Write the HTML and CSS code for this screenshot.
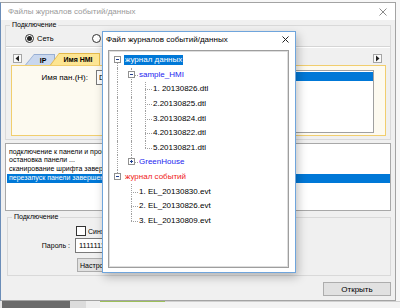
FILE: index.html
```html
<!DOCTYPE html>
<html lang="ru">
<head>
    <meta charset="UTF-8">
    <meta name="viewport" content="width=device-width, initial-scale=1.0">
    <title>Файлы журналов событий/данных</title>
    <link rel="stylesheet" href="styles.css">
</head>
<body>

    <div class="win">
        <div class="titlebar">
            <span class="title">Файлы журналов событий/данных</span>
            <svg class="close" width="8" height="8" viewBox="0 0 8 8"><path d="M0.5 0.5L7.5 7.5M7.5 0.5L0.5 7.5" stroke="#8a8a8a" stroke-width="1"/></svg>
        </div>

        <div class="content">
            <fieldset class="grp grp-top">
                <legend>Подключение</legend>
                <div class="radios">
                    <label class="opt"><span class="radio on"></span>Сеть</label>
                    <label class="opt" aria-label="Последовательный порт"><span class="radio"></span></label>
                </div>
                <div class="tabarea">
                    <div class="tabstrip">
                        <span class="scroll">
                            <svg width="7" height="7" viewBox="0 0 7 7"><path d="M5 0.5L1.5 3.5L5 6.5Z" fill="#222"/></svg>
                        </span>
                        <div class="tab tab-ip"><span class="tab-in">IP</span></div>
                        <div class="tab tab-hmi"><span class="tab-in">Имя HMI</span></div>
                        <span class="scroll scroll-right">
                            <svg width="7" height="7" viewBox="0 0 7 7"><path d="M2 0.5L5.5 3.5L2 6.5Z" fill="#222"/></svg>
                        </span>
                    </div>
                    <div class="tabpage">
                        <label class="lbl">Имя пан.(H):</label>
                        <div class="field">D</div>
                        <ul class="listbox">
                            <li class="sel"></li>
                        </ul>
                    </div>
                </div>
            </fieldset>

            <ul class="log">
                <li>подключение к панели и проверка связи ...</li>
                <li>остановка панели ...</li>
                <li>сканирование шрифта завершено ...</li>
                <li class="sel">перезапуск панели завершен ...</li>
            </ul>

            <fieldset class="grp grp-bottom">
                <legend>Подключение</legend>
                <div class="conn">
                    <span></span>
                    <label class="chk"><span class="box"></span>Синхронизировать время</label>
                    <label class="lbl-pass">Пароль :</label>
                    <div class="field field-pass">11111111</div>
                    <span></span>
                    <button class="btn btn-setup" type="button">Настройки связи...</button>
                </div>
            </fieldset>

            <div class="actions">
                <button class="btn btn-open" type="button">Открыть</button>
            </div>
        </div>
    </div>

    <!-- окно выбора файла журнала -->
    <div class="dlg">
        <div class="dlg-title">
            <span>Файл журналов событий/данных</span>
            <svg class="close" width="7" height="7" viewBox="0 0 7 7"><path d="M0.5 0.5L6.5 6.5M6.5 0.5L0.5 6.5" stroke="#222" stroke-width="1"/></svg>
        </div>
        <div class="tree">
            <div class="row">
                <span class="c down"><span class="exp"></span></span>
                <span class="tx sel">журнал данных</span>
            </div>
            <div class="row">
                <span class="c v"></span>
                <span class="c t"><span class="exp"></span></span>
                <span class="tx node">sample_HMI</span>
            </div>
            <div class="row">
                <span class="c v"></span><span class="c v"></span><span class="c t"></span>
                <span class="tx">1. 20130826.dtl</span>
            </div>
            <div class="row">
                <span class="c v"></span><span class="c v"></span><span class="c t"></span>
                <span class="tx">2.20130825.dtl</span>
            </div>
            <div class="row">
                <span class="c v"></span><span class="c v"></span><span class="c t"></span>
                <span class="tx">3.20130824.dtl</span>
            </div>
            <div class="row">
                <span class="c v"></span><span class="c v"></span><span class="c t"></span>
                <span class="tx">4.20130822.dtl</span>
            </div>
            <div class="row">
                <span class="c v"></span><span class="c v"></span><span class="c l"></span>
                <span class="tx">5.20130821.dtl</span>
            </div>
            <div class="row">
                <span class="c v"></span>
                <span class="c l"><span class="exp plus"></span></span>
                <span class="tx node">GreenHouse</span>
            </div>
            <div class="row">
                <span class="c up"><span class="exp"></span></span>
                <span class="tx evt">журнал событий</span>
            </div>
            <div class="row">
                <span class="c"></span><span class="c t"></span>
                <span class="tx">1. EL_20130830.evt</span>
            </div>
            <div class="row">
                <span class="c"></span><span class="c t"></span>
                <span class="tx">2. EL_20130826.evt</span>
            </div>
            <div class="row">
                <span class="c"></span><span class="c l"></span>
                <span class="tx">3. EL_20130809.evt</span>
            </div>
        </div>
    </div>

    <div class="strip">
        <span class="seg seg-a"></span>
        <span class="seg seg-b"></span>
        <span class="seg seg-c"></span>
        <span class="seg seg-d"></span>
        <span class="seg seg-e"></span>
        <span class="seg seg-f"></span>
    </div>

</body>
</html>
```

FILE: styles.css
```css
* {
    box-sizing: border-box;
}
body {
    margin: 0;
    padding-top: 2px;
    width: 400px;
    height: 308px;
    overflow: hidden;
    position: relative;
    background: #f7f7f7;
    font-family: "Liberation Sans", Arial, sans-serif;
    font-size: 8px;
    color: #000;
}
ul {
    list-style: none;
    margin: 0;
    padding: 0;
}

/* main window */
.win {
    width: 396px;
    height: 299px;
    border: 1px solid #a3a3a3;
    border-left-color: #6b8db8;
    background: #f0f0f0;
    display: flex;
    flex-direction: column;
}
.titlebar {
    height: 17px;
    flex: none;
    display: flex;
    align-items: center;
    justify-content: space-between;
    padding: 0 8px 0 7px;
    background: #fff;
}
.title {
    color: #9a9a9a;
    font-size: 8px;
}
.content {
    flex: 1;
    display: flex;
    flex-direction: column;
    padding: 0 4px;
}

/* group boxes */
.grp {
    margin: 0;
    padding: 0;
    border: 1px solid #d9d9d9;
    min-width: 0;
}
.grp legend {
    margin-left: 4px;
    padding: 0 2px;
    font-size: 7px;
    line-height: 10px;
}
.grp-top {
    height: 120px;
}
.radios {
    height: 16px;
    display: flex;
    align-items: center;
    padding-left: 19px;
}
.opt {
    width: 67px;
    flex: none;
    display: flex;
    align-items: center;
    font-size: 7.5px;
    white-space: nowrap;
}
.radio {
    width: 9px;
    height: 9px;
    border: 1px solid #333;
    border-radius: 50%;
    background: #fff;
    margin-right: 3px;
    display: flex;
    align-items: center;
    justify-content: center;
}
.radio.on::after {
    content: "";
    width: 5px;
    height: 5px;
    border-radius: 50%;
    background: #222;
}

/* tabs */
.tabarea {
    border-top: 1px solid #d5d5d5;
    box-shadow: inset 0 1px 0 #fff;
    padding: 6px 4px 3px 5px;
}
.tabstrip {
    height: 12px;
    display: flex;
    align-items: flex-end;
}
.scroll {
    align-self: flex-start;
    margin: 1px 0 0 2px;
    width: 9px;
    height: 9px;
    border: 1px solid #a5a5a5;
    background: #fafafa;
    display: flex;
    align-items: center;
    justify-content: center;
}
.scroll-right {
    margin: 1px 4px 0 auto;
}
.tab {
    height: 11px;
    padding: 1px 1px 0 1px;
    clip-path: polygon(9px 0, 100% 0, 100% 100%, 0 100%);
}
.tab-in {
    display: flex;
    height: 100%;
    align-items: center;
    justify-content: center;
    font-weight: bold;
    font-size: 7px;
    clip-path: polygon(8px 0, 100% 0, 100% 100%, 0 100%);
    padding-left: 6px;
}
.tab-ip {
    width: 30px;
    margin-left: 3px;
    background: #97aed3;
}
.tab-ip .tab-in {
    background: #c9d7ee;
}
.tab-hmi {
    width: 50px;
    height: 12px;
    margin-left: -5px;
    background: #e2b84a;
    position: relative;
    z-index: 1;
}
.tab-hmi .tab-in {
    background: #fde592;
}
.tabpage {
    height: 71px;
    border: 1px solid #f1ce6e;
    background: #fdfaf0;
    display: flex;
    align-items: flex-start;
    padding: 4px 11px 0 0;
}
.lbl {
    width: 76px;
    flex: none;
    text-align: right;
    line-height: 15px;
    font-size: 8px;
}
.field {
    height: 15px;
    border: 1px solid #7a7a7a;
    background: #fff;
    padding-left: 2px;
    line-height: 13px;
    white-space: nowrap;
    overflow: hidden;
}
.tabpage .field {
    width: 100px;
    margin-left: 8px;
    flex: none;
}
.listbox {
    flex: 1;
    height: 63px;
    margin-left: 4px;
    border: 1px solid #a0a0a0;
    background: #fff;
    padding: 1px 0;
}
.listbox li {
    height: 9px;
}
.sel {
    background: #0078d7;
    color: #fff;
}

/* message log */
.log {
    margin-top: 3px;
    height: 68px;
    border: 1px solid #a8a8a8;
    background: #fff;
    padding: 3.5px 0 0 1px;
}
.log li {
    height: 8.8px;
    line-height: 8.8px;
    font-size: 7px;
    padding-left: 2px;
    white-space: nowrap;
    overflow: hidden;
}

/* lower connection group */
.grp-bottom {
    margin: 1px 0 0 2px;
}
.conn {
    display: grid;
    grid-template-columns: 62px auto;
    grid-template-rows: 14px 15px 19px;
    column-gap: 5px;
    padding: 2px 0 3px 0;
    font-size: 7px;
}
.chk {
    display: flex;
    align-items: center;
    margin-left: 1px;
    white-space: nowrap;
}
.box {
    width: 10px;
    height: 10px;
    border: 1px solid #333;
    background: #fff;
    margin-right: 2px;
}
.lbl-pass {
    text-align: right;
    line-height: 15px;
}
.field-pass {
    width: 120px;
    font-size: 7.5px;
    padding-left: 3px;
}
.btn {
    font-family: inherit;
    font-size: 7px;
    height: 14px;
    padding: 0;
    border: 1px solid #adadad;
    background: #e1e1e1;
    color: #000;
}
.btn-setup {
    align-self: end;
    justify-self: start;
    width: 90px;
    margin-left: 2px;
    text-align: left;
    padding-left: 2px;
}
.actions {
    display: flex;
    justify-content: flex-end;
    margin-top: 6px;
}
.btn-open {
    width: 68px;
    font-size: 8px;
}

/* file dialog */
.dlg {
    position: absolute;
    left: 102px;
    top: 31px;
    width: 194px;
    height: 242px;
    border: 1px solid #6fa5dc;
    background: #fff;
    box-shadow: 2px 4px 9px rgba(0, 0, 0, 0.25);
    display: flex;
    flex-direction: column;
}
.dlg-title {
    height: 13px;
    flex: none;
    display: flex;
    align-items: center;
    justify-content: space-between;
    padding: 1px 6px 0 3px;
    font-size: 8px;
}
.tree {
    flex: 1;
    margin: 5px 6px 4px 5px;
    border: 1px solid #9e9e9e;
    box-shadow: inset 1px 1px 0 #dedede, inset -1px -1px 0 #dedede;
    padding: 2px 0 0 1px;
}
.row {
    height: 14.6px;
    display: flex;
    align-items: center;
}
.c {
    width: 14px;
    flex: none;
    align-self: stretch;
    position: relative;
}
.c::before,
.c::after {
    content: "";
    position: absolute;
    left: 7px;
}
.c.v::before,
.c.t::before {
    top: 0;
    bottom: 0;
    border-left: 1px dotted #a0a0a0;
}
.c.l::before,
.c.up::before {
    top: 0;
    height: 50%;
    border-left: 1px dotted #a0a0a0;
}
.c.down::before {
    top: 50%;
    bottom: 0;
    border-left: 1px dotted #a0a0a0;
}
.c.t::after,
.c.l::after {
    top: 50%;
    width: 7px;
    border-top: 1px dotted #a0a0a0;
}
.exp {
    position: absolute;
    left: 4px;
    top: 50%;
    margin-top: -4px;
    width: 7px;
    height: 7px;
    border: 1px solid #919191;
    background: #fff;
    z-index: 1;
}
.exp::before {
    content: "";
    position: absolute;
    left: 1px;
    top: 2px;
    width: 3px;
    border-top: 1px solid #1f3f8f;
}
.exp.plus::after {
    content: "";
    position: absolute;
    left: 2px;
    top: 1px;
    height: 3px;
    border-left: 1px solid #1f3f8f;
}
.tx {
    padding: 0 1px;
    line-height: 10px;
    font-size: 8px;
    white-space: nowrap;
}
.tx.node {
    color: #2424f0;
}
.tx.evt {
    color: #f02020;
}

/* what is below the window */
.strip {
    display: flex;
    height: 7px;
}
.seg {
    height: 100%;
}
.seg-a {
    width: 2px;
    background: #e6e6e6;
}
.seg-b {
    width: 68px;
    background: #6b6b6b;
}
.seg-c {
    width: 16px;
    background: #dcdcdc;
}
.seg-d {
    width: 14px;
    background: #eeeeee;
}
.seg-e {
    width: 65px;
    background: #f3f3f3;
    border-top: 1px solid #9cbf5a;
}
.seg-f {
    flex: 1;
    background: #f3f3f3;
    border-top: 1px solid #d0d0d0;
}
```
